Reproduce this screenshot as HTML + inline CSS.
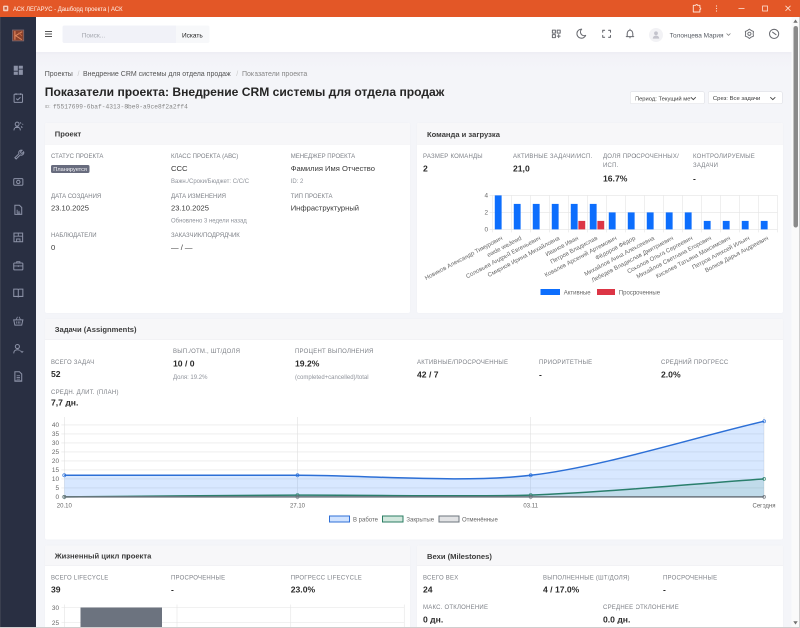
<!DOCTYPE html>
<html><head><meta charset="utf-8"><title>Дашборд проекта</title>
<style>
*{box-sizing:border-box;margin:0;padding:0}
html,body{width:800px;height:628px;overflow:hidden;background:#f4f5f9;font-family:"Liberation Sans",sans-serif;color:#333;position:relative}
.t{position:absolute;white-space:nowrap;line-height:1}
.r{position:absolute}
#wrap{position:absolute;left:0;top:0;width:1600px;height:1256px;transform:scale(0.5);transform-origin:0 0;will-change:transform;background:#f4f5f9;overflow:hidden}
#inner{position:absolute;left:0;top:0;width:800px;height:628px;zoom:2}
</style></head><body>
<div id="wrap"><div id="inner">
<div class="r" style="left:0px;top:0px;width:800px;height:17px;background:#e35727"></div>
<svg class="r" style="left:2.5px;top:4.8px" width="7" height="7" viewBox="0 0 7 7"><rect x="0.6" y="0.6" width="5.2" height="5.6" rx="0.8" fill="#f6cdbd"/><rect x="2" y="2" width="2.4" height="2.6" fill="#c9603f"/></svg>
<div class="t" style="left:13px;top:6.5px;font-size:5.9px;color:#fff3ec;transform:scaleY(1.12);transform-origin:0 100%">АСК ЛЕГАРУС - Дашборд проекта | АСК</div>
<svg class="r" style="left:690px;top:3px" width="110" height="12" viewBox="0 0 110 12"><path d="M3.3 2.3h2.5a0.85 0.85 0 0 1 1.7 0h2.4v2.5a0.85 0.85 0 0 1 0 1.7v2.5H3.3z" fill="none" stroke="#fde3d6" stroke-width="0.95" stroke-linejoin="round"/><circle cx="26.5" cy="3" r="0.6" fill="#fde3d6"/><circle cx="26.5" cy="5.5" r="0.6" fill="#fde3d6"/><circle cx="26.5" cy="8" r="0.6" fill="#fde3d6"/><path d="M48.5 5.5h6" stroke="#fde3d6" stroke-width="0.8"/><rect x="72.5" y="3" width="5" height="5" fill="none" stroke="#fde3d6" stroke-width="0.8"/><path d="M95.5 2.8l5 5M100.5 2.8l-5 5" stroke="#fde3d6" stroke-width="0.8"/></svg>
<div class="r" style="left:0px;top:17px;width:36px;height:610px;background:#292f42"></div>
<div class="r" style="left:0px;top:17px;width:1px;height:610px;background:#3a3f4f"></div>
<svg class="r" style="left:11px;top:28.5px" width="14" height="14" viewBox="0 0 14 14"><rect x="1.5" y="1.5" width="11.2" height="10.9" fill="#8a412b" stroke="#7a6870" stroke-width="0.8"/><path d="M3.9 2.6v8.6" stroke="#e58a62" stroke-width="1.1" fill="none"/><path d="M11.2 3.2L4.6 7.2 10.8 11.2" stroke="#dd875e" stroke-width="1.0" fill="none"/><path d="M7.6 4.2l3.4 3.2" stroke="#c96a45" stroke-width="0.8" fill="none"/></svg>
<svg class="r" style="left:12.7px;top:64.5px" width="11.6" height="11.6" viewBox="-0.8 -0.8 11.6 11.6"><g transform="translate(5 5) scale(1.14) translate(-5 -5)"><rect x="1" y="1" width="3.6" height="4.4" fill="#8b91a6"/><rect x="5.4" y="1" width="3.6" height="2.6" fill="#8b91a6"/><rect x="1" y="6.2" width="3.6" height="2.8" fill="#8b91a6"/><rect x="5.4" y="4.4" width="3.6" height="4.6" fill="#8b91a6"/></g></svg>
<svg class="r" style="left:12.7px;top:92.2px" width="11.6" height="11.6" viewBox="-0.8 -0.8 11.6 11.6"><g transform="translate(5 5) scale(1.14) translate(-5 -5)"><rect x="1.3" y="1.8" width="7.4" height="7.2" rx="0.8" fill="none" stroke="#8b91a6" stroke-width="0.9"/><path d="M3 1v1.6M7 1v1.6M3.2 5.7l1.3 1.2 2.4-2.4" stroke="#8b91a6" stroke-width="0.9" fill="none"/></g></svg>
<svg class="r" style="left:12.7px;top:120.2px" width="11.6" height="11.6" viewBox="-0.8 -0.8 11.6 11.6"><g transform="translate(5 5) scale(1.14) translate(-5 -5)"><circle cx="4" cy="3.5" r="1.7" fill="none" stroke="#8b91a6" stroke-width="0.9"/><path d="M1.2 9c0-2 1.3-3 2.8-3s2.8 1 2.8 3" fill="none" stroke="#8b91a6" stroke-width="0.9"/><path d="M6.5 2l1 1M8.5 3.5l0.8 0.3M7.5 5.5l1 1" stroke="#8b91a6" stroke-width="0.8"/></g></svg>
<svg class="r" style="left:12.7px;top:148.2px" width="11.6" height="11.6" viewBox="-0.8 -0.8 11.6 11.6"><g transform="translate(5 5) scale(1.14) translate(-5 -5)"><path d="M2 8.5l3.6-3.6a2.2 2.2 0 0 1 2.7-3l-1.4 1.4 0.4 1 1 0.4 1.4-1.4a2.2 2.2 0 0 1-3 2.7L3.1 9.6z" fill="none" stroke="#8b91a6" stroke-width="0.9"/></g></svg>
<svg class="r" style="left:12.7px;top:176.2px" width="11.6" height="11.6" viewBox="-0.8 -0.8 11.6 11.6"><g transform="translate(5 5) scale(1.14) translate(-5 -5)"><rect x="1" y="2.2" width="8" height="5.8" rx="0.8" fill="none" stroke="#8b91a6" stroke-width="0.9"/><circle cx="5" cy="5.1" r="1.5" fill="none" stroke="#8b91a6" stroke-width="0.9"/></g></svg>
<svg class="r" style="left:12.7px;top:204.2px" width="11.6" height="11.6" viewBox="-0.8 -0.8 11.6 11.6"><g transform="translate(5 5) scale(1.14) translate(-5 -5)"><path d="M2 1h4l2 2v6H2z" fill="none" stroke="#8b91a6" stroke-width="0.9"/><path d="M4 5v3M5.6 6v2M3.8 8h3" stroke="#8b91a6" stroke-width="0.8"/></g></svg>
<svg class="r" style="left:12.7px;top:231.7px" width="11.6" height="11.6" viewBox="-0.8 -0.8 11.6 11.6"><g transform="translate(5 5) scale(1.14) translate(-5 -5)"><rect x="1.2" y="1.3" width="7.6" height="7.6" fill="none" stroke="#8b91a6" stroke-width="0.9"/><path d="M1.2 4h7.6M5 1.3V4M3.5 9V6.5h3V9" stroke="#8b91a6" stroke-width="0.8" fill="none"/></g></svg>
<svg class="r" style="left:12.7px;top:259.4px" width="11.6" height="11.6" viewBox="-0.8 -0.8 11.6 11.6"><g transform="translate(5 5) scale(1.14) translate(-5 -5)"><rect x="1" y="3" width="8" height="6" rx="0.8" fill="none" stroke="#8b91a6" stroke-width="0.9"/><path d="M3.6 3V1.8h2.8V3M1 5.6h8M5 5v1.4" stroke="#8b91a6" stroke-width="0.8" fill="none"/></g></svg>
<svg class="r" style="left:12.7px;top:287.2px" width="11.6" height="11.6" viewBox="-0.8 -0.8 11.6 11.6"><g transform="translate(5 5) scale(1.14) translate(-5 -5)"><path d="M1 1.8h3.2a0.8 0.8 0 0 1 0.8 0.8V9a0.8 0.8 0 0 0-0.8-0.8H1zM9 1.8H5.8a0.8 0.8 0 0 0-0.8 0.8V9a0.8 0.8 0 0 1 0.8-0.8H9z" fill="none" stroke="#8b91a6" stroke-width="0.9"/></g></svg>
<svg class="r" style="left:12.7px;top:315.2px" width="11.6" height="11.6" viewBox="-0.8 -0.8 11.6 11.6"><g transform="translate(5 5) scale(1.14) translate(-5 -5)"><path d="M1 4.2h8L8 8.8H2z" fill="none" stroke="#8b91a6" stroke-width="0.9"/><path d="M3 4.2L4.3 1.5M7 4.2L5.7 1.5M3.6 5.5v2M5 5.5v2M6.4 5.5v2" stroke="#8b91a6" stroke-width="0.7"/></g></svg>
<svg class="r" style="left:12.7px;top:343.2px" width="11.6" height="11.6" viewBox="-0.8 -0.8 11.6 11.6"><g transform="translate(5 5) scale(1.14) translate(-5 -5)"><circle cx="4.2" cy="3" r="1.8" fill="none" stroke="#8b91a6" stroke-width="0.9"/><path d="M1 9c0-2 1.4-3.2 3.2-3.2 1 0 1.6 0.3 2 0.7" fill="none" stroke="#8b91a6" stroke-width="0.9"/><path d="M6.8 6.6l1.5 1.5 1-1" stroke="#8b91a6" stroke-width="0.8" fill="none"/></g></svg>
<svg class="r" style="left:12.7px;top:370.7px" width="11.6" height="11.6" viewBox="-0.8 -0.8 11.6 11.6"><g transform="translate(5 5) scale(1.14) translate(-5 -5)"><path d="M2 1h4l2 2v6H2z" fill="none" stroke="#8b91a6" stroke-width="0.9"/><path d="M3.5 4.5h3M3.5 6h3M3.5 7.5h3" stroke="#8b91a6" stroke-width="0.7"/></g></svg>
<div class="r" style="left:36px;top:52px;width:755.5px;height:18px;background:linear-gradient(#ededf3,#f2f2f7 20%,#f4f5f9)"></div>
<div class="r" style="left:36px;top:17px;width:757px;height:35px;background:#fff"></div>
<svg class="r" style="left:44.5px;top:30.5px" width="8" height="7" viewBox="0 0 8 7"><path d="M0.5 1h7M0.5 3.5h7M0.5 6h7" stroke="#555" stroke-width="1"/></svg>
<div class="r" style="left:62.5px;top:25.7px;width:147px;height:17.5px;background:#f7f8fa;border-radius:2px"></div>
<div class="r" style="left:62.5px;top:25.7px;width:113.3px;height:17.5px;background:#f1f2f8;border-radius:2px 0 0 2px"></div>
<div class="t" style="left:81.7px;top:32.0px;font-size:6.5px;color:#a3a6ad">Поиск...</div>
<div class="t" style="left:182px;top:32.0px;font-size:6.5px;color:#222">Искать</div>
<svg class="r" style="left:0;top:0" width="800" height="60" viewBox="0 0 800 60"><rect x="552.4" y="30.1" width="3" height="3" style="stroke:#6a6c72;fill:none;stroke-width:1.05;stroke-linecap:round;stroke-linejoin:round"/><rect x="557.2" y="30.1" width="3" height="3" style="stroke:#6a6c72;fill:none;stroke-width:1.05;stroke-linecap:round;stroke-linejoin:round"/><rect x="552.4" y="34.6" width="3" height="3" style="stroke:#6a6c72;fill:none;stroke-width:1.05;stroke-linecap:round;stroke-linejoin:round"/><path d="M558.7 34.7v2.9M557.25 36.15h2.9" style="stroke:#6a6c72;fill:none;stroke-width:1.05;stroke-linecap:round;stroke-linejoin:round"/><g transform="translate(575.4 27.6) scale(0.505)"><path d="M12 3c.132 0 .263 0 .393 0a7.5 7.5 0 0 0 7.92 12.446a9 9 0 1 1 -8.313 -12.454z" style="stroke:#6a6c72;fill:none;stroke-width:1.05;stroke-linecap:round;stroke-linejoin:round;stroke-width:2.1"/></g><path d="M602.7 32.2v-1.9h1.9M608.6 30.3h1.9v1.9M610.5 35.4v1.9h-1.9M604.6 37.3h-1.9v-1.9" style="stroke:#6a6c72;fill:none;stroke-width:1.05;stroke-linecap:round;stroke-linejoin:round"/><path d="M626.3 36.6h7.4M627.2 36.4v-2.7a2.8 3.6 0 0 1 5.6 0v2.7M630 29.3v0.7M630 37v0.9" style="stroke:#6a6c72;fill:none;stroke-width:1.05;stroke-linecap:round;stroke-linejoin:round"/><path d="M749.40,29.10 L751.27,30.55 L753.47,31.45 L753.15,33.80 L753.47,36.15 L751.27,37.05 L749.40,38.50 L747.52,37.05 L745.33,36.15 L745.65,33.80 L745.33,31.45 L747.52,30.55Z" style="stroke:#6a6c72;fill:none;stroke-width:1.05;stroke-linecap:round;stroke-linejoin:round;stroke-width:0.95"/><circle cx="749.4" cy="33.8" r="1.6" style="stroke:#6a6c72;fill:none;stroke-width:1.05;stroke-linecap:round;stroke-linejoin:round;stroke-width:0.95"/><circle cx="774.1" cy="33.9" r="4.6" style="stroke:#6a6c72;fill:none;stroke-width:1.05;stroke-linecap:round;stroke-linejoin:round"/><path d="M772.6 32.2l3.4 2.5" style="stroke:#6a6c72;fill:none;stroke-width:1.05;stroke-linecap:round;stroke-linejoin:round"/></svg>
<svg class="r" style="left:649px;top:28px" width="14" height="14" viewBox="0 0 14 14"><circle cx="7" cy="7" r="7" fill="#f2f2f5"/><circle cx="7" cy="5.3" r="1.9" fill="#c3c3cc"/><path d="M3.8 10.6c0-2 1.4-3 3.2-3s3.2 1 3.2 3z" fill="#c3c3cc"/></svg>
<div class="t" style="left:669.6px;top:32.0px;font-size:6.5px;color:#555a62">Толонцева Мария</div>
<svg class="r" style="left:726px;top:32.5px" width="5" height="4" viewBox="0 0 5 4"><path d="M0.6 1l1.9 1.9L4.4 1" stroke="#777" stroke-width="0.7" fill="none"/></svg>
<div class="r" style="left:791.5px;top:17px;width:7.5px;height:610px;background:#fafafa"></div>
<svg class="r" style="left:792.5px;top:18.5px" width="6" height="5" viewBox="0 0 6 5"><path d="M0.8 4.2L3 1 5.2 4.2z" fill="#707070"/></svg>
<div class="r" style="left:793.4px;top:26px;width:4.5px;height:201.5px;background:#8a8a8a;border-radius:2.25px"></div>
<svg class="r" style="left:792.5px;top:620.5px" width="6" height="5" viewBox="0 0 6 5"><path d="M0.8 0.8L3 4 5.2 0.8z" fill="#707070"/></svg>
<div class="r" style="left:799px;top:17px;width:1px;height:611px;background:#d0d0d0"></div>
<div class="r" style="left:0px;top:627px;width:800px;height:1px;background:#cfcfcf"></div>
<div class="t" style="left:44.75px;top:70px;font-size:7px;color:#555">Проекты</div>
<div class="t" style="left:77.5px;top:70px;font-size:7px;color:#c8c8c8">/</div>
<div class="t" style="left:83px;top:70px;font-size:7px;color:#555">Внедрение CRM системы для отдела продаж</div>
<div class="t" style="left:236.2px;top:70px;font-size:7px;color:#c8c8c8">/</div>
<div class="t" style="left:242px;top:70px;font-size:7px;color:#858585">Показатели проекта</div>
<div class="t" style="left:44.75px;top:86px;font-size:12.1px;color:#252525;font-weight:bold">Показатели проекта: Внедрение CRM системы для отдела продаж</div>
<div class="t" style="left:44.6px;top:104.5px;font-size:4.6px;color:#a0a0a0">ID:</div>
<div class="t" style="left:53px;top:104.1px;font-size:6.2px;color:#858585;letter-spacing:0.03px;font-family:'Liberation Mono'">f5517699-6baf-4313-8be0-a9ce8f2a2ff4</div>
<div class="r" style="left:630.2px;top:91.7px;width:74.4px;height:12.3px;background:#fff;border:0.6px solid #dadbe0;border-radius:1.5px"></div>
<div class="t" style="left:634.9px;top:95.4px;font-size:5.8px;color:#3a3a3a">Период: Текущий ме</div>
<svg class="r" style="left:690.2px;top:96px" width="7" height="5" viewBox="0 0 7 5"><path d="M0.8 1.2L3.3 3.6 5.8 1.2" stroke="#444" stroke-width="0.85" fill="none"/></svg>
<div class="r" style="left:708.2px;top:91.7px;width:74.4px;height:12.3px;background:#fff;border:0.6px solid #dadbe0;border-radius:1.5px"></div>
<div class="t" style="left:712.9px;top:95.4px;font-size:5.9px;color:#3a3a3a">Срез: Все задачи</div>
<svg class="r" style="left:769.4px;top:96px" width="7" height="5" viewBox="0 0 7 5"><path d="M0.8 1.2L3.3 3.6 5.8 1.2" stroke="#444" stroke-width="0.85" fill="none"/></svg>
<div class="r" style="left:45px;top:123px;width:365px;height:190px;background:#fff;border-radius:2px;box-shadow:0 0 2px rgba(40,40,80,0.03)"></div>
<div class="r" style="left:45px;top:123px;width:365px;height:21.5px;background:#f7f7f9;border-radius:2px 2px 0 0;border-bottom:0.6px solid #ececf0"></div>
<div class="t" style="left:54.75px;top:130.0px;font-size:7.6px;color:#3b3b3b;font-weight:bold">Проект</div>
<div class="r" style="left:417px;top:123px;width:366px;height:190px;background:#fff;border-radius:2px;box-shadow:0 0 2px rgba(40,40,80,0.03)"></div>
<div class="r" style="left:417px;top:123px;width:366px;height:21.5px;background:#f7f7f9;border-radius:2px 2px 0 0;border-bottom:0.6px solid #ececf0"></div>
<div class="t" style="left:427px;top:130.25px;font-size:7.6px;color:#3b3b3b;font-weight:bold">Команда и загрузка</div>
<div class="r" style="left:45px;top:319px;width:738px;height:220.3px;background:#fff;border-radius:2px;box-shadow:0 0 2px rgba(40,40,80,0.03)"></div>
<div class="r" style="left:45px;top:319px;width:738px;height:21px;background:#f7f7f9;border-radius:2px 2px 0 0;border-bottom:0.6px solid #ececf0"></div>
<div class="t" style="left:54.75px;top:325.5px;font-size:7.6px;color:#3b3b3b;font-weight:bold">Задачи (Assignments)</div>
<div class="r" style="left:45px;top:545.3px;width:365px;height:90px;background:#fff;border-radius:2px;box-shadow:0 0 2px rgba(40,40,80,0.03)"></div>
<div class="r" style="left:45px;top:545.3px;width:365px;height:20.8px;background:#f7f7f9;border-radius:2px 2px 0 0;border-bottom:0.6px solid #ececf0"></div>
<div class="t" style="left:54.75px;top:552.0px;font-size:7.6px;color:#3b3b3b;font-weight:bold">Жизненный цикл проекта</div>
<div class="r" style="left:417px;top:545.3px;width:366px;height:90px;background:#fff;border-radius:2px;box-shadow:0 0 2px rgba(40,40,80,0.03)"></div>
<div class="r" style="left:417px;top:545.3px;width:366px;height:20.8px;background:#f7f7f9;border-radius:2px 2px 0 0;border-bottom:0.6px solid #ececf0"></div>
<div class="t" style="left:427px;top:552.5px;font-size:7.6px;color:#3b3b3b;font-weight:bold">Вехи (Milestones)</div>
<div class="t" style="left:51px;top:153px;font-size:6px;color:#7d8087">СТАТУС ПРОЕКТА</div>
<div class="r" style="left:51px;top:165.2px;width:38.7px;height:7.6px;background:#686c7e;border-radius:1.6px"></div>
<div class="t" style="left:53.3px;top:166.7px;font-size:5.6px;color:#f4f4f8">Планируется</div>
<div class="t" style="left:171px;top:153px;font-size:6px;color:#7d8087">КЛАСС ПРОЕКТА (АВС)</div>
<div class="t" style="left:171px;top:164.5px;font-size:7.6px;color:#3a3a3a">ССС</div>
<div class="t" style="left:171px;top:178px;font-size:6px;color:#8f939b">Важн./Сроки/Бюджет: С/С/С</div>
<div class="t" style="left:290.7px;top:153px;font-size:6px;color:#7d8087">МЕНЕДЖЕР ПРОЕКТА</div>
<div class="t" style="left:290.7px;top:164.5px;font-size:7.6px;color:#3a3a3a">Фамилия Имя Отчество</div>
<div class="t" style="left:290.7px;top:178px;font-size:6px;color:#8f939b">ID: 2</div>
<div class="t" style="left:51px;top:193px;font-size:6px;color:#7d8087">ДАТА СОЗДАНИЯ</div>
<div class="t" style="left:51px;top:204.0px;font-size:7.6px;color:#3a3a3a">23.10.2025</div>
<div class="t" style="left:171px;top:193px;font-size:6px;color:#7d8087">ДАТА ИЗМЕНЕНИЯ</div>
<div class="t" style="left:171px;top:204.0px;font-size:7.6px;color:#3a3a3a">23.10.2025</div>
<div class="t" style="left:171px;top:217.5px;font-size:6px;color:#8f939b">Обновлено 3 недели назад</div>
<div class="t" style="left:290.7px;top:193px;font-size:6px;color:#7d8087">ТИП ПРОЕКТА</div>
<div class="t" style="left:290.7px;top:204.0px;font-size:7.6px;color:#3a3a3a">Инфраструктурный</div>
<div class="t" style="left:51px;top:232px;font-size:6px;color:#7d8087">НАБЛЮДАТЕЛИ</div>
<div class="t" style="left:51px;top:243.5px;font-size:7.6px;color:#3a3a3a">0</div>
<div class="t" style="left:171px;top:232px;font-size:6px;color:#7d8087">ЗАКАЗЧИК/ПОДРЯДЧИК</div>
<div class="t" style="left:171px;top:243.5px;font-size:7.6px;color:#3a3a3a">— / —</div>
<div class="t" style="left:423px;top:153px;font-size:6px;color:#7d8087;letter-spacing:0.23px">РАЗМЕР КОМАНДЫ</div>
<div class="t" style="left:423px;top:164.25px;font-size:8.6px;color:#2a2a2a;font-weight:bold">2</div>
<div class="t" style="left:513px;top:153px;font-size:6px;color:#7d8087;letter-spacing:0.23px">АКТИВНЫЕ ЗАДАЧИ/ИСП.</div>
<div class="t" style="left:513px;top:164.25px;font-size:8.6px;color:#2a2a2a;font-weight:bold">21,0</div>
<div class="t" style="left:603px;top:153px;font-size:6px;color:#7d8087;letter-spacing:0.23px">ДОЛЯ ПРОСРОЧЕННЫХ/</div>
<div class="t" style="left:603px;top:162px;font-size:6px;color:#7d8087;letter-spacing:0.23px">ИСП.</div>
<div class="t" style="left:603px;top:174.25px;font-size:8.6px;color:#2a2a2a;font-weight:bold">16.7%</div>
<div class="t" style="left:693px;top:153px;font-size:6px;color:#7d8087;letter-spacing:0.23px">КОНТРОЛИРУЕМЫЕ</div>
<div class="t" style="left:693px;top:162px;font-size:6px;color:#7d8087;letter-spacing:0.23px">ЗАДАЧИ</div>
<div class="t" style="left:693px;top:174.25px;font-size:8.6px;color:#2a2a2a;font-weight:bold">-</div>
<svg class="r" style="left:0;top:0" width="800" height="628" viewBox="0 0 800 628"><line x1="489.5" y1="229.4" x2="777.5" y2="229.4" stroke="#e4e4e4" stroke-width="0.6"/><line x1="489.5" y1="212.4" x2="777.5" y2="212.4" stroke="#e4e4e4" stroke-width="0.6"/><line x1="489.5" y1="195.4" x2="777.5" y2="195.4" stroke="#e4e4e4" stroke-width="0.6"/><line x1="492.5" y1="195.4" x2="492.5" y2="232.4" stroke="#e4e4e4" stroke-width="0.6"/><line x1="511.5" y1="195.4" x2="511.5" y2="232.4" stroke="#e4e4e4" stroke-width="0.6"/><line x1="530.5" y1="195.4" x2="530.5" y2="232.4" stroke="#e4e4e4" stroke-width="0.6"/><line x1="549.5" y1="195.4" x2="549.5" y2="232.4" stroke="#e4e4e4" stroke-width="0.6"/><line x1="568.5" y1="195.4" x2="568.5" y2="232.4" stroke="#e4e4e4" stroke-width="0.6"/><line x1="587.5" y1="195.4" x2="587.5" y2="232.4" stroke="#e4e4e4" stroke-width="0.6"/><line x1="606.5" y1="195.4" x2="606.5" y2="232.4" stroke="#e4e4e4" stroke-width="0.6"/><line x1="625.5" y1="195.4" x2="625.5" y2="232.4" stroke="#e4e4e4" stroke-width="0.6"/><line x1="644.5" y1="195.4" x2="644.5" y2="232.4" stroke="#e4e4e4" stroke-width="0.6"/><line x1="663.5" y1="195.4" x2="663.5" y2="232.4" stroke="#e4e4e4" stroke-width="0.6"/><line x1="682.5" y1="195.4" x2="682.5" y2="232.4" stroke="#e4e4e4" stroke-width="0.6"/><line x1="701.5" y1="195.4" x2="701.5" y2="232.4" stroke="#e4e4e4" stroke-width="0.6"/><line x1="720.5" y1="195.4" x2="720.5" y2="232.4" stroke="#e4e4e4" stroke-width="0.6"/><line x1="739.5" y1="195.4" x2="739.5" y2="232.4" stroke="#e4e4e4" stroke-width="0.6"/><line x1="758.5" y1="195.4" x2="758.5" y2="232.4" stroke="#e4e4e4" stroke-width="0.6"/><line x1="777.5" y1="195.4" x2="777.5" y2="232.4" stroke="#e4e4e4" stroke-width="0.6"/><rect x="494.78" y="195.40" width="6.84" height="34.00" fill="#0d6efd"/><rect x="513.78" y="203.90" width="6.84" height="25.50" fill="#0d6efd"/><rect x="532.78" y="203.90" width="6.84" height="25.50" fill="#0d6efd"/><rect x="551.78" y="203.90" width="6.84" height="25.50" fill="#0d6efd"/><rect x="570.78" y="203.90" width="6.84" height="25.50" fill="#0d6efd"/><rect x="578.38" y="220.90" width="6.84" height="8.50" fill="#dc3545"/><rect x="589.78" y="203.90" width="6.84" height="25.50" fill="#0d6efd"/><rect x="597.38" y="220.90" width="6.84" height="8.50" fill="#dc3545"/><rect x="608.78" y="212.40" width="6.84" height="17.00" fill="#0d6efd"/><rect x="627.78" y="212.40" width="6.84" height="17.00" fill="#0d6efd"/><rect x="646.78" y="212.40" width="6.84" height="17.00" fill="#0d6efd"/><rect x="665.78" y="212.40" width="6.84" height="17.00" fill="#0d6efd"/><rect x="684.78" y="212.40" width="6.84" height="17.00" fill="#0d6efd"/><rect x="703.78" y="220.90" width="6.84" height="8.50" fill="#0d6efd"/><rect x="722.78" y="220.90" width="6.84" height="8.50" fill="#0d6efd"/><rect x="741.78" y="220.90" width="6.84" height="8.50" fill="#0d6efd"/><rect x="760.78" y="220.90" width="6.84" height="8.50" fill="#0d6efd"/></svg>
<div class="t" style="right:312px;top:226.70000000000002px;font-size:6.4px;color:#666">0</div>
<div class="t" style="right:312px;top:209.70000000000002px;font-size:6.4px;color:#666">2</div>
<div class="t" style="right:312px;top:192.70000000000002px;font-size:6.4px;color:#666">4</div>
<div class="t" style="right:298.00px;top:234.5px;font-size:6px;color:#666;transform-origin:100% 50%;transform:rotate(-28deg);line-height:1">Новиков Александр Тимурович</div>
<div class="t" style="right:279.00px;top:234.5px;font-size:6px;color:#666;transform-origin:100% 50%;transform:rotate(-28deg);line-height:1">ewde wedewd</div>
<div class="t" style="right:260.00px;top:234.5px;font-size:6px;color:#666;transform-origin:100% 50%;transform:rotate(-28deg);line-height:1">Соловьев Андрей Евгеньевич</div>
<div class="t" style="right:241.00px;top:234.5px;font-size:6px;color:#666;transform-origin:100% 50%;transform:rotate(-28deg);line-height:1">Смирнов Ирина Михайловна</div>
<div class="t" style="right:222.00px;top:234.5px;font-size:6px;color:#666;transform-origin:100% 50%;transform:rotate(-28deg);line-height:1">Иванов Иван</div>
<div class="t" style="right:203.00px;top:234.5px;font-size:6px;color:#666;transform-origin:100% 50%;transform:rotate(-28deg);line-height:1">Петров Владислав</div>
<div class="t" style="right:184.00px;top:234.5px;font-size:6px;color:#666;transform-origin:100% 50%;transform:rotate(-28deg);line-height:1">Ковалев Арсений Артемович</div>
<div class="t" style="right:165.00px;top:234.5px;font-size:6px;color:#666;transform-origin:100% 50%;transform:rotate(-28deg);line-height:1">Фёдоров Фёдор</div>
<div class="t" style="right:146.00px;top:234.5px;font-size:6px;color:#666;transform-origin:100% 50%;transform:rotate(-28deg);line-height:1">Михайлов Анна Алексеевна</div>
<div class="t" style="right:127.00px;top:234.5px;font-size:6px;color:#666;transform-origin:100% 50%;transform:rotate(-28deg);line-height:1">Лебедев Владислав Дмитриевич</div>
<div class="t" style="right:108.00px;top:234.5px;font-size:6px;color:#666;transform-origin:100% 50%;transform:rotate(-28deg);line-height:1">Соколов Ольга Сергеевич</div>
<div class="t" style="right:89.00px;top:234.5px;font-size:6px;color:#666;transform-origin:100% 50%;transform:rotate(-28deg);line-height:1">Михайлов Светлана Егорович</div>
<div class="t" style="right:70.00px;top:234.5px;font-size:6px;color:#666;transform-origin:100% 50%;transform:rotate(-28deg);line-height:1">Киселев Татьяна Максимович</div>
<div class="t" style="right:51.00px;top:234.5px;font-size:6px;color:#666;transform-origin:100% 50%;transform:rotate(-28deg);line-height:1">Петров Алексей Ильич</div>
<div class="t" style="right:32.00px;top:234.5px;font-size:6px;color:#666;transform-origin:100% 50%;transform:rotate(-28deg);line-height:1">Волков Дарья Андреевич</div>
<div class="r" style="left:540.7px;top:289px;width:19.5px;height:6px;background:#0d6efd"></div>
<div class="t" style="left:563.7px;top:289.5px;font-size:6px;color:#666">Активные</div>
<div class="r" style="left:596.8px;top:289px;width:18px;height:6px;background:#dc3545"></div>
<div class="t" style="left:618.8px;top:289.5px;font-size:6px;color:#666">Просроченные</div>
<div class="t" style="left:51px;top:358.75px;font-size:6px;color:#7d8087;letter-spacing:0.23px">ВСЕГО ЗАДАЧ</div>
<div class="t" style="left:51px;top:370px;font-size:8.6px;color:#2a2a2a;font-weight:bold">52</div>
<div class="t" style="left:173px;top:348px;font-size:6px;color:#7d8087;letter-spacing:0.23px">ВЫП./ОТМ., ШТ/ДОЛЯ</div>
<div class="t" style="left:173px;top:359.25px;font-size:8.6px;color:#2a2a2a;font-weight:bold">10 / 0</div>
<div class="t" style="left:173px;top:374px;font-size:6px;color:#8f939b">Доля: 19.2%</div>
<div class="t" style="left:295px;top:348px;font-size:6px;color:#7d8087;letter-spacing:0.23px">ПРОЦЕНТ ВЫПОЛНЕНИЯ</div>
<div class="t" style="left:295px;top:359.25px;font-size:8.6px;color:#2a2a2a;font-weight:bold">19.2%</div>
<div class="t" style="left:295px;top:374px;font-size:6px;color:#8f939b">(completed+cancelled)/total</div>
<div class="t" style="left:417px;top:358.75px;font-size:6px;color:#7d8087;letter-spacing:0.23px">АКТИВНЫЕ/ПРОСРОЧЕННЫЕ</div>
<div class="t" style="left:417px;top:370.5px;font-size:8.6px;color:#2a2a2a;font-weight:bold">42 / 7</div>
<div class="t" style="left:539px;top:358.75px;font-size:6px;color:#7d8087;letter-spacing:0.23px">ПРИОРИТЕТНЫЕ</div>
<div class="t" style="left:539px;top:370.5px;font-size:8.6px;color:#2a2a2a;font-weight:bold">-</div>
<div class="t" style="left:661px;top:358.75px;font-size:6px;color:#7d8087;letter-spacing:0.23px">СРЕДНИЙ ПРОГРЕСС</div>
<div class="t" style="left:661px;top:370.5px;font-size:8.6px;color:#2a2a2a;font-weight:bold">2.0%</div>
<div class="t" style="left:51px;top:388.75px;font-size:6px;color:#7d8087;letter-spacing:0.23px">СРЕДН. ДЛИТ. (ПЛАН)</div>
<div class="t" style="left:51px;top:398.5px;font-size:8.6px;color:#2a2a2a;font-weight:bold">7,7 дн.</div>
<svg class="r" style="left:0;top:0" width="800" height="628" viewBox="0 0 800 628"><line x1="61.3" y1="496.90" x2="764" y2="496.90" stroke="#e3e3e3" stroke-width="0.6"/><line x1="61.3" y1="487.90" x2="764" y2="487.90" stroke="#e3e3e3" stroke-width="0.6"/><line x1="61.3" y1="478.90" x2="764" y2="478.90" stroke="#e3e3e3" stroke-width="0.6"/><line x1="61.3" y1="469.90" x2="764" y2="469.90" stroke="#e3e3e3" stroke-width="0.6"/><line x1="61.3" y1="460.90" x2="764" y2="460.90" stroke="#e3e3e3" stroke-width="0.6"/><line x1="61.3" y1="451.90" x2="764" y2="451.90" stroke="#e3e3e3" stroke-width="0.6"/><line x1="61.3" y1="442.90" x2="764" y2="442.90" stroke="#e3e3e3" stroke-width="0.6"/><line x1="61.3" y1="433.90" x2="764" y2="433.90" stroke="#e3e3e3" stroke-width="0.6"/><line x1="61.3" y1="424.90" x2="764" y2="424.90" stroke="#e3e3e3" stroke-width="0.6"/><line x1="64.3" y1="417" x2="64.3" y2="499.9" stroke="#e0e0e0" stroke-width="0.6"/><line x1="297.5" y1="417" x2="297.5" y2="499.9" stroke="#e0e0e0" stroke-width="0.6"/><line x1="530.7" y1="417" x2="530.7" y2="499.9" stroke="#e0e0e0" stroke-width="0.6"/><line x1="764" y1="417" x2="764" y2="499.9" stroke="#e0e0e0" stroke-width="0.6"/><path d="M64.30,475.30 C134.26,475.30 227.54,475.30 297.50,475.30 C367.46,475.30 461.65,483.29 530.70,475.30 C601.60,467.09 694.01,437.50 764.00,421.30 L764,496.9 L64.3,496.9 Z" fill="rgba(13,110,253,0.16)"/><path d="M64.30,496.90 C134.26,496.36 227.54,495.37 297.50,495.10 C367.46,494.83 460.82,496.90 530.70,495.10 C600.77,492.67 694.01,483.76 764.00,478.90 L764,496.9 L64.3,496.9 Z" fill="rgba(25,135,84,0.12)"/><path d="M64.30,496.90 C134.26,496.90 227.54,496.90 297.50,496.90 C367.46,496.90 460.74,496.90 530.70,496.90 C600.69,496.90 694.01,496.90 764.00,496.90 L764,496.9 L64.3,496.9 Z" fill="rgba(108,117,125,0.2)"/><path d="M64.30,475.30 C134.26,475.30 227.54,475.30 297.50,475.30 C367.46,475.30 461.65,483.29 530.70,475.30 C601.60,467.09 694.01,437.50 764.00,421.30" fill="none" stroke="#2c6fd6" stroke-width="1.5"/><circle cx="64.3" cy="475.30" r="1.6" fill="rgba(13,110,253,0.16)" stroke="#2c6fd6" stroke-width="0.6"/><circle cx="297.5" cy="475.30" r="1.6" fill="rgba(13,110,253,0.16)" stroke="#2c6fd6" stroke-width="0.6"/><circle cx="530.7" cy="475.30" r="1.6" fill="rgba(13,110,253,0.16)" stroke="#2c6fd6" stroke-width="0.6"/><circle cx="764" cy="421.30" r="1.6" fill="rgba(13,110,253,0.16)" stroke="#2c6fd6" stroke-width="0.6"/><path d="M64.30,496.90 C134.26,496.36 227.54,495.37 297.50,495.10 C367.46,494.83 460.82,496.90 530.70,495.10 C600.77,492.67 694.01,483.76 764.00,478.90" fill="none" stroke="#2a7f6c" stroke-width="1.5"/><circle cx="64.3" cy="496.90" r="1.6" fill="rgba(25,135,84,0.12)" stroke="#2a7f6c" stroke-width="0.6"/><circle cx="297.5" cy="495.10" r="1.6" fill="rgba(25,135,84,0.12)" stroke="#2a7f6c" stroke-width="0.6"/><circle cx="530.7" cy="495.10" r="1.6" fill="rgba(25,135,84,0.12)" stroke="#2a7f6c" stroke-width="0.6"/><circle cx="764" cy="478.90" r="1.6" fill="rgba(25,135,84,0.12)" stroke="#2a7f6c" stroke-width="0.6"/><path d="M64.30,496.90 C134.26,496.90 227.54,496.90 297.50,496.90 C367.46,496.90 460.74,496.90 530.70,496.90 C600.69,496.90 694.01,496.90 764.00,496.90" fill="none" stroke="#6c757d" stroke-width="1.5"/><circle cx="64.3" cy="496.90" r="1.6" fill="rgba(108,117,125,0.2)" stroke="#6c757d" stroke-width="0.6"/><circle cx="297.5" cy="496.90" r="1.6" fill="rgba(108,117,125,0.2)" stroke="#6c757d" stroke-width="0.6"/><circle cx="530.7" cy="496.90" r="1.6" fill="rgba(108,117,125,0.2)" stroke="#6c757d" stroke-width="0.6"/><circle cx="764" cy="496.90" r="1.6" fill="rgba(108,117,125,0.2)" stroke="#6c757d" stroke-width="0.6"/></svg>
<div class="t" style="right:741px;top:494.2px;font-size:6.4px;color:#666">0</div>
<div class="t" style="right:741px;top:485.2px;font-size:6.4px;color:#666">5</div>
<div class="t" style="right:741px;top:476.2px;font-size:6.4px;color:#666">10</div>
<div class="t" style="right:741px;top:467.2px;font-size:6.4px;color:#666">15</div>
<div class="t" style="right:741px;top:458.2px;font-size:6.4px;color:#666">20</div>
<div class="t" style="right:741px;top:449.2px;font-size:6.4px;color:#666">25</div>
<div class="t" style="right:741px;top:440.2px;font-size:6.4px;color:#666">30</div>
<div class="t" style="right:741px;top:431.2px;font-size:6.4px;color:#666">35</div>
<div class="t" style="right:741px;top:422.2px;font-size:6.4px;color:#666">40</div>
<div class="t" style="left:64.3px;top:502.7px;font-size:6px;color:#666;transform:translateX(-50%)">20.10</div>
<div class="t" style="left:297.5px;top:502.7px;font-size:6px;color:#666;transform:translateX(-50%)">27.10</div>
<div class="t" style="left:530.7px;top:502.7px;font-size:6px;color:#666;transform:translateX(-50%)">03.11</div>
<div class="t" style="left:764px;top:502.7px;font-size:6px;color:#666;transform:translateX(-50%)">Сегодня</div>
<div class="r" style="left:329px;top:515.6px;width:21px;height:7px;background:rgba(13,110,253,0.2);border:1.3px solid #2f6fd6"></div>
<div class="t" style="left:353px;top:516.5px;font-size:6px;color:#666">В работе</div>
<div class="r" style="left:382px;top:515.6px;width:21.5px;height:7px;background:rgba(25,135,84,0.2);border:1.3px solid #2a7d62"></div>
<div class="t" style="left:406.4px;top:516.5px;font-size:6px;color:#666">Закрытые</div>
<div class="r" style="left:438.4px;top:515.6px;width:21.2px;height:7px;background:rgba(108,117,125,0.2);border:1.3px solid #6c757d"></div>
<div class="t" style="left:462px;top:516.5px;font-size:6px;color:#666">Отменённые</div>
<div class="t" style="left:51px;top:574.25px;font-size:6px;color:#7d8087;letter-spacing:0.23px">ВСЕГО LIFECYCLE</div>
<div class="t" style="left:51px;top:585.5px;font-size:8.6px;color:#2a2a2a;font-weight:bold">39</div>
<div class="t" style="left:171px;top:574.25px;font-size:6px;color:#7d8087;letter-spacing:0.23px">ПРОСРОЧЕННЫЕ</div>
<div class="t" style="left:171px;top:585.5px;font-size:8.6px;color:#2a2a2a;font-weight:bold">-</div>
<div class="t" style="left:290.75px;top:574.25px;font-size:6px;color:#7d8087;letter-spacing:0.23px">ПРОГРЕСС LIFECYCLE</div>
<div class="t" style="left:290.75px;top:585.5px;font-size:8.6px;color:#2a2a2a;font-weight:bold">23.0%</div>
<svg class="r" style="left:0;top:0" width="800" height="628" viewBox="0 0 800 628"><line x1="61.5" y1="607.5" x2="404.25" y2="607.5" stroke="#e3e3e3" stroke-width="0.6"/><line x1="61.5" y1="622.5" x2="404.25" y2="622.5" stroke="#e3e3e3" stroke-width="0.6"/><line x1="64.5" y1="604.5" x2="64.5" y2="628" stroke="#e3e3e3" stroke-width="0.6"/><line x1="177" y1="604.5" x2="177" y2="628" stroke="#e3e3e3" stroke-width="0.6"/><line x1="290.75" y1="604.5" x2="290.75" y2="628" stroke="#e3e3e3" stroke-width="0.6"/><line x1="404.25" y1="604.5" x2="404.25" y2="628" stroke="#e3e3e3" stroke-width="0.6"/><rect x="80.5" y="607.5" width="81.5" height="30" fill="#6c737f"/></svg>
<div class="t" style="right:741px;top:604.8px;font-size:6.4px;color:#666">30</div>
<div class="t" style="right:741px;top:619.8px;font-size:6.4px;color:#666">25</div>
<div class="t" style="left:423px;top:574.25px;font-size:6px;color:#7d8087;letter-spacing:0.23px">ВСЕГО ВЕХ</div>
<div class="t" style="left:423px;top:585.5px;font-size:8.6px;color:#2a2a2a;font-weight:bold">24</div>
<div class="t" style="left:543px;top:574.25px;font-size:6px;color:#7d8087;letter-spacing:0.23px">ВЫПОЛНЕННЫЕ (ШТ/ДОЛЯ)</div>
<div class="t" style="left:543px;top:585.5px;font-size:8.6px;color:#2a2a2a;font-weight:bold">4 / 17.0%</div>
<div class="t" style="left:663px;top:574.25px;font-size:6px;color:#7d8087;letter-spacing:0.23px">ПРОСРОЧЕННЫЕ</div>
<div class="t" style="left:663px;top:585.5px;font-size:8.6px;color:#2a2a2a;font-weight:bold">-</div>
<div class="t" style="left:423px;top:603.75px;font-size:6px;color:#7d8087;letter-spacing:0.23px">МАКС. ОТКЛОНЕНИЕ</div>
<div class="t" style="left:423px;top:615.5px;font-size:8.6px;color:#2a2a2a;font-weight:bold">0 дн.</div>
<div class="t" style="left:603px;top:603.75px;font-size:6px;color:#7d8087;letter-spacing:0.23px">СРЕДНЕЕ ОТКЛОНЕНИЕ</div>
<div class="t" style="left:603px;top:615.5px;font-size:8.6px;color:#2a2a2a;font-weight:bold">0.0 дн.</div>
<div class="r" style="left:799px;top:17px;width:1px;height:611px;background:#d0d0d0"></div>
<div class="r" style="left:0px;top:627px;width:800px;height:1px;background:#cfcfcf"></div>
</div></div></body></html>
